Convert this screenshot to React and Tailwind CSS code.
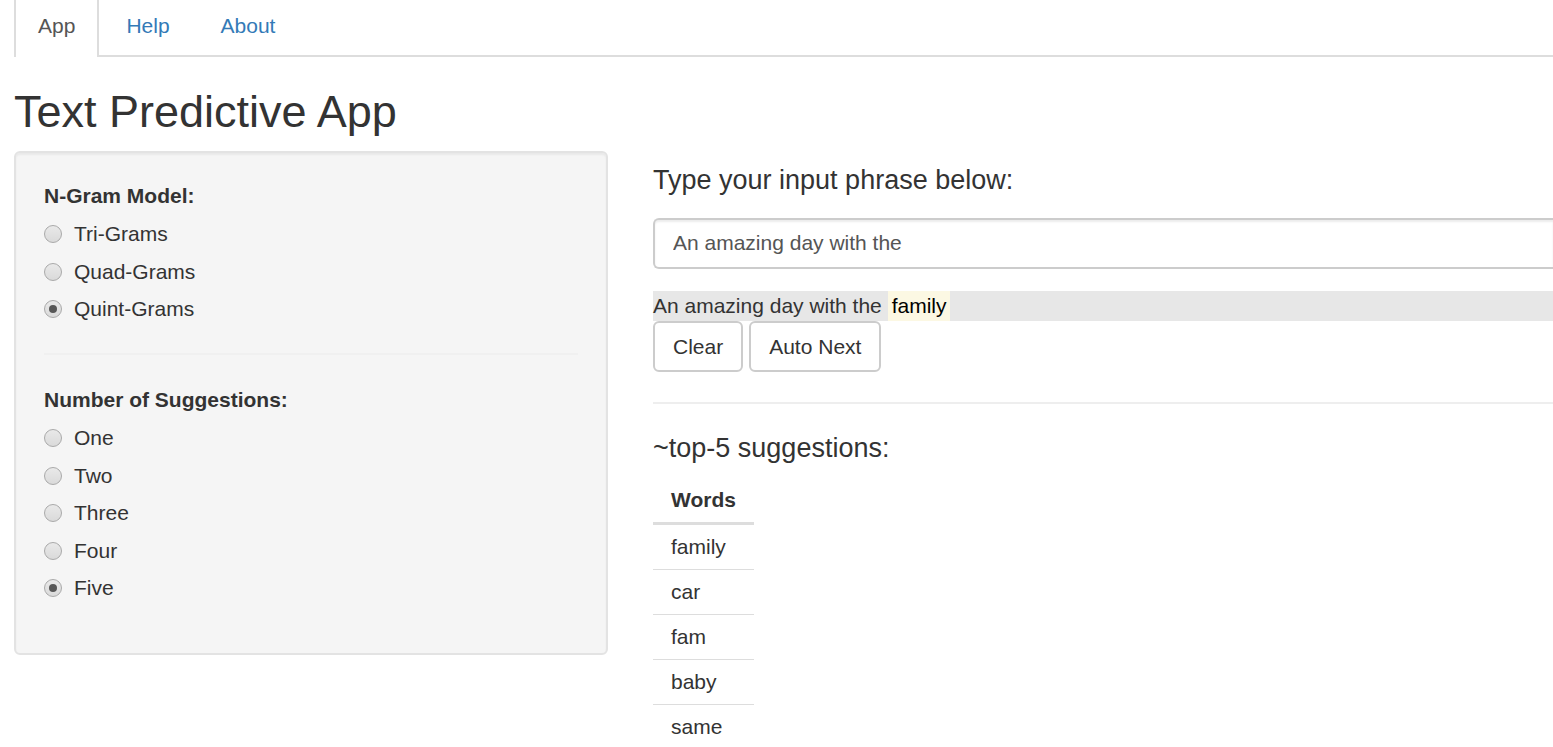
import { useState } from "react";

const MODELS = ["Tri-Grams", "Quad-Grams", "Quint-Grams"];
const COUNTS = ["One", "Two", "Three", "Four", "Five"];
const WORDS = ["family", "car", "fam", "baby", "same"];

function RadioGroup({ name, title, options, value, onChange, listClass }) {
  return (
    <div role="radiogroup" aria-labelledby={name + "-title"}>
      <div id={name + "-title"} className="mb-2 font-bold">
        {title}
      </div>
      <div className={"flex flex-col items-start justify-between " + listClass}>
        {options.map((option) => (
          <label key={option} className="flex items-center gap-3">
            <input
              type="radio"
              name={name}
              checked={value === option}
              onChange={() => onChange(option)}
              className="grid size-[18px] appearance-none place-content-center rounded-full border border-[#a9a9a9] bg-linear-to-b from-[#e9e9e9] to-[#dadada] before:size-2 before:rounded-full before:content-[''] checked:before:bg-[#575757]"
            />
            {option}
          </label>
        ))}
      </div>
    </div>
  );
}

function Tabs() {
  return (
    <nav className="flex pl-[14px]">
      <a href="#app" aria-current="page" className="border-x-2 border-[#ddd] px-[22px] pt-[11px] pb-[15px] text-[#555]">
        App
      </a>
      <div className="flex flex-1 gap-[3px] border-b-2 border-[#ddd] pl-[3px] text-[#337ab7]">
        <a href="#help" className="px-6 pt-[11px] pb-[14px]">
          Help
        </a>
        <a href="#about" className="px-6 pt-[11px] pb-[14px]">
          About
        </a>
      </div>
    </nav>
  );
}

export default function App() {
  const [model, setModel] = useState("Quint-Grams");
  const [count, setCount] = useState("Five");
  const [phrase, setPhrase] = useState("An amazing day with the");
  const shown = WORDS.slice(0, COUNTS.indexOf(count) + 1);
  const buttonClass = "rounded-md border-2 border-[#ccc] bg-white px-[18px] pt-[9px] pb-2";

  return (
    <div className="h-screen overflow-hidden bg-white font-['Liberation_Sans',Arial,sans-serif] text-[21px] leading-[30px] text-[#333]">
      <Tabs />
      <h1 className="mt-[30px] mb-[14px] pl-[14px] text-[45px] leading-[50px]">Text Predictive App</h1>

      <div className="grid grid-cols-[33fr_50fr] items-start gap-[45px] pl-[14px]">
        <form className="rounded-md border-2 border-[#e3e3e3] bg-[#f5f5f5] px-7 pt-7 pb-[50px] shadow-[inset_0_2px_2px_rgba(0,0,0,0.05)]">
          <RadioGroup
            name="model"
            title="N-Gram Model:"
            options={MODELS}
            value={model}
            onChange={setModel}
            listClass="min-h-[105px]"
          />
          <hr className="mt-[29px] mb-[30px] border-t-2 border-[#f0f0f0]" />
          <RadioGroup
            name="count"
            title="Number of Suggestions:"
            options={COUNTS}
            value={count}
            onChange={setCount}
            listClass="min-h-[180px]"
          />
        </form>

        <main className="pt-[15px]">
          <h2 className="mb-6 text-[27px] leading-[28px]">
            <label htmlFor="phrase">Type your input phrase below:</label>
          </h2>
          <input
            id="phrase"
            type="text"
            value={phrase}
            onChange={(e) => setPhrase(e.target.value)}
            className="mb-[22px] block h-[51px] w-full rounded-l-md border-2 border-r-0 border-[#ccc] bg-white px-[18px] pb-[2px] text-[#555] shadow-[inset_0_2px_2px_rgba(0,0,0,0.075)] outline-none"
          />
          <p className="flex bg-[#e7e7e7]">
            <span className="whitespace-pre">{phrase + " "}</span>
            <mark className="bg-[#fcf8e3] px-1 text-black">{WORDS[0]}</mark>
          </p>
          <div className="flex gap-[6px]">
            <button type="button" className={buttonClass} onClick={() => setPhrase("")}>
              Clear
            </button>
            <button type="button" className={buttonClass} onClick={() => setPhrase(phrase + " " + WORDS[0])}>
              Auto Next
            </button>
          </div>
          <hr className="my-[30px] border-t-2 border-[#eee]" />
          <h2 className="mb-4 text-[27px] leading-[28px]">~top-{shown.length} suggestions:</h2>
          <table className="border-separate border-spacing-0 text-left">
            <thead>
              <tr>
                <th className="border-b-3 border-[#ddd] px-[18px] py-[7px] font-bold">Words</th>
              </tr>
            </thead>
            <tbody className="[&>tr:last-child>td]:border-b-0">
              {shown.map((word) => (
                <tr key={word}>
                  <td className="border-b border-[#ddd] px-[18px] py-[7px]">{word}</td>
                </tr>
              ))}
            </tbody>
          </table>
        </main>
      </div>
    </div>
  );
}
